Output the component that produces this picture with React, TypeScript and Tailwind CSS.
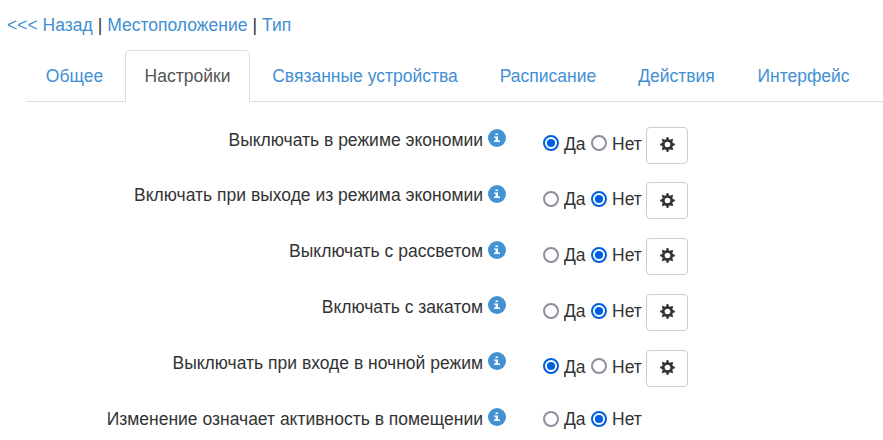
import React from "react";

const tabs = [
  { name: "Общее", box: "w-[97px]" },
  { name: "Настройки", box: "w-[125px]", active: true },
  { name: "Связанные устройства", box: "w-[230px]" },
  { name: "Расписание", box: "w-[136px]" },
  { name: "Действия", box: "w-[121px]" },
  { name: "Интерфейс", box: "w-[133px]" },
];

const rows = [
  { label: "Выключать в режиме экономии", yes: true, gear: "mb-[2px]", h: "h-[55px]", lift: "mb-[5px]", info: "mt-[2px]" },
  { label: "Включать при выходе из режима экономии", yes: false, gear: "mb-0", h: "h-[56px]", lift: "mb-[3px]", info: "mt-[3px]" },
  { label: "Выключать с рассветом", yes: false, gear: "mb-[2px]", h: "h-[56px]", lift: "mb-[3px]", info: "mt-[3px]" },
  { label: "Включать с закатом", yes: false, gear: "mb-[2px]", h: "h-[56px]", lift: "mb-[3px]", info: "mt-[2px]" },
  { label: "Выключать при входе в ночной режим", yes: true, gear: "mb-[2px]", h: "h-[56px]", lift: "mb-[5px]", info: "mt-[2px]" },
  { label: "Изменение означает активность в помещении", yes: false, gear: "", h: "h-[34px]", lift: "mb-[3px]", info: "mt-[2px]" },
];

function Info({ offset }: { offset: string }) {
  return (
    <svg className={`ml-[5px] h-[18px] w-[18px] shrink-0 ${offset}`} viewBox="0 0 18 18">
      <circle cx="9" cy="9" r="9" fill="#4393d4" />
      <path d="M7.5 4.6h2.5v1.5H7.5zM6 7.4h4v4.2h2V13H6v-1.4h1.6V8.7H6z" fill="#fff" />
    </svg>
  );
}

function Radio({ on, lift }: { on: boolean; lift: string }) {
  return (
    <svg className={`h-4 w-4 shrink-0 ${lift}`} viewBox="0 0 16 16">
      <circle cx="8" cy="8" r="7" fill="#fff" stroke={on ? "#0060df" : "#8f8f9d"} strokeWidth="2" />
      {on && <circle cx="8" cy="8" r="4.1" fill="#0060df" />}
    </svg>
  );
}

function Gear({ lift }: { lift: string }) {
  return (
    <svg className={`h-[15px] w-[15px] ${lift}`} viewBox="-7.5 -7.5 15 15">
      {[0, 45, 90, 135].map((a) => (
        <path key={a} d="M-1.4-5L-.8-7.4H.8L1.4-5V5L.8 7.4H-.8L-1.4 5z" fill="#333" transform={`rotate(${a})`} />
      ))}
      <circle r="5.5" fill="#333" />
      <circle r="2.8" fill="#fff" />
    </svg>
  );
}

export default function App() {
  return (
    <div className="h-[440px] w-[883px] overflow-hidden bg-white font-['Liberation_Sans',Arial,sans-serif] text-[17.5px] leading-[25px] text-[#333]">
      <div className="flex h-[50px] gap-[5px] pl-[7px] pt-[13px] whitespace-nowrap">
        <a className="text-[#428fd3]">&lt;&lt;&lt; Назад</a>
        <span>|</span>
        <a className="text-[#428fd3]">Местоположение</a>
        <span>|</span>
        <a className="text-[#428fd3]">Тип</a>
      </div>
      <nav className="ml-[26px] flex h-[52px] border-b border-[#ddd]">
        {tabs.map((t) => (
          <div
            key={t.name}
            className={`flex shrink-0 justify-center whitespace-nowrap ${t.box} ${
              t.active
                ? "ml-[2px] h-[52px] rounded-t-[5px] border border-b-0 border-[#ddd] bg-white pt-[13px] text-[#555]"
                : "pt-[14px] text-[#428fd3]"
            }`}
          >
            {t.name}
          </div>
        ))}
      </nav>
      <div className="pt-[25px]">
        {rows.map((r) => (
          <div key={r.label} className={`flex items-start ${r.h}`}>
            <div className="flex w-[506px] justify-end whitespace-nowrap">
              <span className="pt-px">{r.label}</span>
              <Info offset={r.info} />
            </div>
            <div className={`ml-[37px] flex items-center whitespace-nowrap ${r.gear ? "h-[37px]" : "h-[29px]"}`}>
              <Radio on={r.yes} lift={r.lift} />
              <span className="mb-[2px] ml-[5px] w-[27px]">Да</span>
              <Radio on={!r.yes} lift={r.lift} />
              <span className="mb-[2px] ml-[5px] w-[34px]">Нет</span>
              {r.gear && (
                <span className="flex h-[37px] w-[42px] items-center justify-center rounded-[4px] border border-[#ccc]">
                  <Gear lift={r.gear} />
                </span>
              )}
            </div>
          </div>
        ))}
      </div>
    </div>
  );
}
